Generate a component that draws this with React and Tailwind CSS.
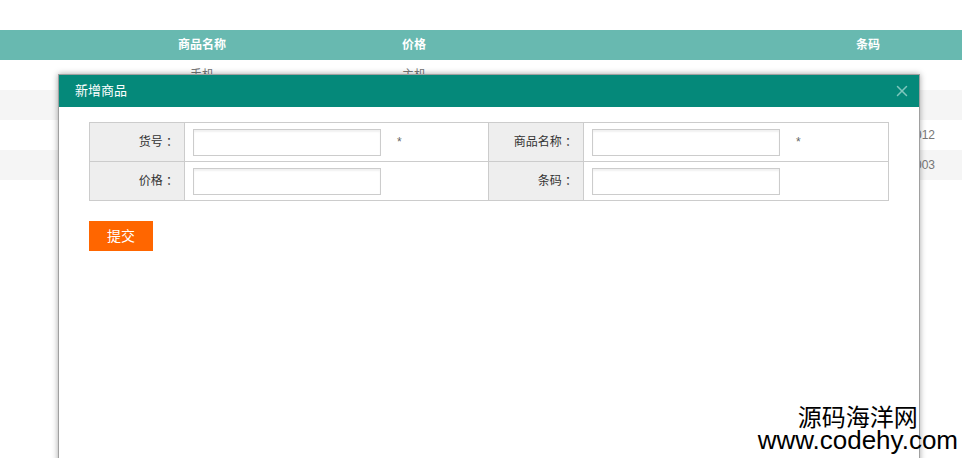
import { X } from "lucide-react";

const rows = [
  { name: "手机", price: "主机", code: "" },
  { name: "", price: "", code: "" },
  { name: "", price: "", code: "6920000000012" },
  { name: "", price: "", code: "6920000000003" },
];

const cols = "grid grid-cols-[100px_204px_220px_276px_136px_1fr]";

function Field({ label, required, last, top }) {
  return (
    <>
      <div
        className={`bg-[#eeeeee] border-r border-[#cccccc] flex items-center justify-end pr-[6px] text-[12px] text-[#333] ${
          top ? "border-b" : ""
        }`}
      >
        {label} ：
      </div>
      <div
        className={`flex items-center pl-[8px] border-[#cccccc] ${last ? "" : "border-r"} ${
          top ? "border-b" : ""
        }`}
      >
        <input
          type="text"
          className="w-[188px] h-[27px] border border-[#cccccc] shadow-[inset_0_2px_2px_rgba(0,0,0,0.06)] outline-none px-2 text-[12px]"
        />
        {required && <span className="ml-[16px] text-[12px] text-[#666]">*</span>}
      </div>
    </>
  );
}

export default function App() {
  return (
    <div
      className="relative w-full h-[458px] overflow-hidden bg-white"
      style={{ fontFamily: '"Liberation Sans", "Noto Sans CJK SC", sans-serif' }}
    >
      {/* background list */}
      <div className="pt-[30px]">
        <div className={`${cols} h-[30px] bg-[#68b9b0] text-white text-[12px] font-bold items-center`}>
          <div />
          <div className="text-center">商品名称</div>
          <div className="text-center">价格</div>
          <div />
          <div className="text-center">条码</div>
          <div />
        </div>
        {rows.map((r, i) => (
          <div
            key={i}
            className={`${cols} h-[30px] items-center text-[12px] text-[#777] ${
              i % 2 === 1 ? "bg-[#f5f5f5]" : "bg-white"
            }`}
          >
            <div />
            <div className="text-center">{r.name}</div>
            <div className="text-center">{r.price}</div>
            <div />
            <div className="text-right pr-[1px]">{r.code}</div>
            <div />
          </div>
        ))}
      </div>

      {/* dialog */}
      <div className="absolute left-[58px] top-[74px] w-[862px] h-[400px] bg-white border border-[#a0a0a0] shadow-[0_0_6px_rgba(0,0,0,0.35)]">
        <div className="h-[32px] bg-[#05897a] flex items-center justify-between pl-[16px] pr-[8px]">
          <span className="text-white text-[13px]">新增商品</span>
          <X className="w-[18px] h-[18px] text-[#7fc6bd]" strokeWidth={2} />
        </div>
        <div className="pt-[15px] pl-[30px]">
          <div className="w-[800px] border border-[#cccccc] grid grid-cols-[95px_304px_95px_1fr] grid-rows-[39px_38px]">
            <Field label="货号" required top />
            <Field label="商品名称" required top last />
            <Field label="价格" />
            <Field label="条码" last />
          </div>
          <button className="mt-[20px] w-[64px] h-[30px] bg-[#ff6600] text-white text-[14px]">
            提交
          </button>
        </div>
      </div>

      {/* watermark */}
      <div className="absolute right-[4px] bottom-[6px] text-center text-black">
        <div
          className="text-[24px] leading-[24px]"
          style={{ fontFamily: '"Noto Sans CJK SC", sans-serif' }}
        >
          源码海洋网
        </div>
        <div className="text-[26px] leading-[24px]">www.codehy.com</div>
      </div>
    </div>
  );
}
